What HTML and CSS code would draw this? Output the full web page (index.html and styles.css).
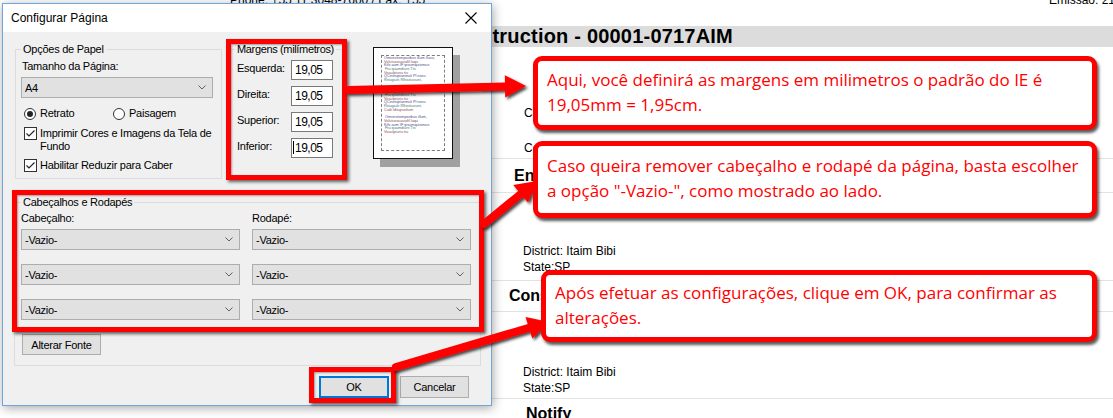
FILE: index.html
```html
<!DOCTYPE html>
<html lang="pt-BR">
<head>
    <meta charset="UTF-8">
    <title>Configurar Página</title>
    <link rel="stylesheet" href="styles.css">
</head>
<body>
<div class="screen">

    <!-- documento que fica por trás do diálogo -->
    <div class="doc">
        <div class="doc-top">
            <span class="doc-phone">Phone: +55 11 3048-7600 / Fax: +55</span>
            <span class="doc-emissao">Emissão: 21/07/2017 10:32</span>
        </div>
        <h1 class="doc-title">Instruction - 00001-0717AIM</h1>
        <div class="info info-top">
            <p>CNPJ: 00.000.000/0001-00</p>
            <p>Contato: Operacional</p>
        </div>
        <div class="sec-head sec-en">Endereço de Entrega</div>
        <div class="info info-mid">
            <p>District: Itaim Bibi</p>
            <p>State:SP</p>
        </div>
        <div class="sec-head sec-con">Consignee</div>
        <div class="info info-low">
            <p>District: Itaim Bibi</p>
            <p>State:SP</p>
        </div>
        <div class="sec-head sec-notify">Notify</div>
    </div>

    <!-- janela Configurar Página -->
    <div class="dialog">
        <div class="titlebar">
            <span>Configurar Página</span>
            <svg class="close" width="12" height="12" viewBox="0 0 12 12">
                <path d="M0.5 0.5 L11.5 11.5 M11.5 0.5 L0.5 11.5" stroke="#000" stroke-width="1.1" fill="none"/>
            </svg>
        </div>
        <div class="dialog-body">
            <div class="top-row">
                <fieldset class="group paper">
                    <legend>Opções de Papel</legend>
                    <div class="label">Tamanho da Página:</div>
                    <div class="combo combo-size">
                        <span>A4</span>
                        <svg width="8" height="5" viewBox="0 0 8 5"><path d="M0.5 0.5 L4 4 L7.5 0.5" stroke="#606060" fill="none"/></svg>
                    </div>
                    <div class="orient">
                        <label class="radio radio-on"><i></i>Retrato</label>
                        <label class="radio"><i></i>Paisagem</label>
                    </div>
                    <label class="check check-bg">
                        <i><svg width="11" height="11" viewBox="0 0 11 11"><path d="M1.5 5.5 L4 8 L9.5 2.5" stroke="#222" stroke-width="1.2" fill="none"/></svg></i>
                        <span>Imprimir Cores e Imagens da Tela de Fundo</span>
                    </label>
                    <label class="check">
                        <i><svg width="11" height="11" viewBox="0 0 11 11"><path d="M1.5 5.5 L4 8 L9.5 2.5" stroke="#222" stroke-width="1.2" fill="none"/></svg></i>
                        <span>Habilitar Reduzir para Caber</span>
                    </label>
                </fieldset>

                <fieldset class="group margins">
                    <legend>Margens (milímetros)</legend>
                    <div class="m-row"><span>Esquerda:</span><div class="field">19,05</div></div>
                    <div class="m-row"><span>Direita:</span><div class="field">19,05</div></div>
                    <div class="m-row"><span>Superior:</span><div class="field">19,05</div></div>
                    <div class="m-row"><span>Inferior:</span><div class="field"><b class="caret"></b>19,05</div></div>
                </fieldset>

                <div class="preview">
                    <div class="sheet">
                        <div class="sheet-area">
                            <p><span class="t1">Omnesitemporibus illum Ilusu,</span><br><span class="t2">Volutusoiuarafil laqu</span><br><span class="t1">Kifs aum IF ipsumquisimus</span><br><span class="t3">&nbsp;Ftu quamdiunt Tts</span><br><span class="t2">Voaulpturiu tiu</span><br><span class="t1">QCinesiptanmuli Pl nosu</span><br><span class="t3">Ritiugiuls Rllssitusiunt,</span></p>
                            <p><span class="t2">Volutusoiuarafil laqu</span><br><span class="t1">Kifs aum IF ipsumquisimus</span><br><span class="t3">&nbsp;Ftu quamdiunt Tts</span><br><span class="t2">Voaulpturiu tiu</span><br><span class="t1">QCinesiptanmuli Pl nosu</span><br><span class="t3">Ritiugiuls Rllssitusiunt,</span><br><span class="t2">Cudi lditupunlium</span></p>
                            <p><span class="t1">&nbsp;Omnesitemporibus illum,</span><br><span class="t2">Volutusoiuarafil laqu</span><br><span class="t1">Kifs aum IF ipsumquisimus</span><br><span class="t3">&nbsp;Ftu quamdiunt Tts</span><br><span class="t2">Voaulpturiu tiu</span></p>
                        </div>
                    </div>
                </div>
            </div>

            <fieldset class="group headers">
                <legend>Cabeçalhos e Rodapés</legend>
                <div class="hf-grid">
                    <div class="label">Cabeçalho:</div>
                    <div class="label">Rodapé:</div>
                    <div class="combo"><span>-Vazio-</span><svg width="8" height="5" viewBox="0 0 8 5"><path d="M0.5 0.5 L4 4 L7.5 0.5" stroke="#606060" fill="none"/></svg></div>
                    <div class="combo"><span>-Vazio-</span><svg width="8" height="5" viewBox="0 0 8 5"><path d="M0.5 0.5 L4 4 L7.5 0.5" stroke="#606060" fill="none"/></svg></div>
                    <div class="combo"><span>-Vazio-</span><svg width="8" height="5" viewBox="0 0 8 5"><path d="M0.5 0.5 L4 4 L7.5 0.5" stroke="#606060" fill="none"/></svg></div>
                    <div class="combo"><span>-Vazio-</span><svg width="8" height="5" viewBox="0 0 8 5"><path d="M0.5 0.5 L4 4 L7.5 0.5" stroke="#606060" fill="none"/></svg></div>
                    <div class="combo"><span>-Vazio-</span><svg width="8" height="5" viewBox="0 0 8 5"><path d="M0.5 0.5 L4 4 L7.5 0.5" stroke="#606060" fill="none"/></svg></div>
                    <div class="combo"><span>-Vazio-</span><svg width="8" height="5" viewBox="0 0 8 5"><path d="M0.5 0.5 L4 4 L7.5 0.5" stroke="#606060" fill="none"/></svg></div>
                </div>
                <button class="btn btn-font">Alterar Fonte</button>
            </fieldset>

            <div class="actions">
                <button class="btn btn-ok">OK</button>
                <button class="btn btn-cancel">Cancelar</button>
            </div>
        </div>
    </div>

    <!-- destaques vermelhos -->
    <div class="mark mark-margins"></div>
    <div class="mark mark-headers"></div>
    <div class="mark mark-ok"></div>

    <svg class="arrows" width="1113" height="418" viewBox="0 0 1113 418">
        <defs>
            <filter id="sh" x="-20%" y="-20%" width="140%" height="140%">
                <feDropShadow dx="2" dy="2" stdDeviation="1.4" flood-color="#000" flood-opacity="0.75"/>
            </filter>
        </defs>
        <g filter="url(#sh)" fill="#f00" stroke="#f00">
            <line x1="349" y1="90" x2="507" y2="86.4" stroke-width="8" stroke-linecap="round"/>
            <polygon points="505.2,97.6 504.8,75.2 526,86" stroke="none"/>
            <line x1="484" y1="224" x2="522" y2="193" stroke-width="8" stroke-linecap="round"/>
            <polygon points="528,202.6 513.2,185 537,181" stroke="none"/>
            <line x1="396" y1="367" x2="530" y2="327.5" stroke-width="8" stroke-linecap="round"/>
            <polygon points="532.3,338.6 525.5,317 549,322" stroke="none"/>
        </g>
    </svg>

    <div class="callout c1">Aqui, você definirá as margens em milimetros o padrão do IE é<br>19,05mm = 1,95cm.</div>
    <div class="callout c2">Caso queira remover cabeçalho e rodapé da página, basta escolher<br>a opção "-Vazio-", como mostrado ao lado.</div>
    <div class="callout c3">Após efetuar as configurações, clique em OK, para confirmar as<br>alterações.</div>
</div>
</body>
</html>
```

FILE: styles.css
```css
* {
    box-sizing: border-box;
}
body {
    margin: 0;
    background: #fff;
    font-family: "Liberation Sans", Arial, sans-serif;
}
.screen {
    position: relative;
    width: 1113px;
    height: 418px;
    overflow: hidden;
    background: #fff;
}

/* documento ao fundo */
.doc {
    margin-left: 400px;
    width: 713px;
    font-size: 12px;
    color: #000;
}
.doc-top {
    display: flex;
    height: 12px;
    margin-top: -6px;
    line-height: 12px;
    white-space: nowrap;
}
.doc-phone {
    margin-left: -170px;
    width: 819px;
    flex: none;
}
.doc-title {
    margin: 20px 0 0;
    height: 21px;
    line-height: 21px;
    padding-left: 63px;
    background: #dcdcdc;
    font-size: 20px;
    letter-spacing: 0.2px;
    font-weight: bold;
    white-space: nowrap;
}
.info p {
    margin: 0;
    line-height: 16px;
    white-space: nowrap;
}
.info-top {
    height: 111px;
    padding: 58px 0 0 124px;
}
.info-top p + p {
    margin-top: 19px;
}
.info-mid,
.info-low {
    border-top: 1px solid #e2e2e2;
    padding-left: 123px;
}
.info-mid {
    height: 88px;
    padding-top: 50px;
}
.info-low {
    height: 87px;
    padding-top: 52px;
}
.sec-head {
    border-top: 1px solid #e2e2e2;
    font-size: 16px;
    font-weight: bold;
    white-space: nowrap;
}
.sec-en {
    height: 34px;
    line-height: 33px;
    padding-left: 114px;
}
.sec-con {
    height: 31px;
    line-height: 30px;
    padding-left: 109px;
}
.sec-notify {
    height: 30px;
    line-height: 30px;
    padding-left: 126px;
}

/* janela */
.dialog {
    position: absolute;
    left: 2px;
    top: 3px;
    width: 490px;
    height: 403px;
    border: 1px solid #70a5db;
    background: #f0f0f0;
    box-shadow: 1px 2px 10px rgba(0, 0, 0, 0.35);
    font-size: 11px;
    letter-spacing: -0.25px;
    color: #000;
}
.titlebar {
    display: flex;
    align-items: center;
    justify-content: space-between;
    height: 28px;
    padding: 0 8px 0 8px;
    background: #fff;
    font-size: 12px;
    letter-spacing: 0;
}
.close {
    margin-right: 6px;
}
.dialog-body {
    padding: 11px 0 0 12px;
}
.top-row {
    display: flex;
    align-items: flex-start;
}
.group {
    margin: 0;
    border: 1px solid #dcdcdc;
    min-width: 0;
}
.group legend {
    padding: 0 2px;
    line-height: 13px;
    white-space: nowrap;
}
.label {
    line-height: 13px;
}
.paper {
    width: 207px;
    height: 136px;
    padding: 4px 8px 0 5px;
}
.paper > .label {
    margin-left: 1px;
}
.combo {
    display: flex;
    align-items: center;
    justify-content: space-between;
    height: 21px;
    padding: 0 6px 0 3px;
    background: #e1e1e1;
    border: 1px solid #adadad;
}
.combo svg {
    display: block;
}
.combo-size {
    width: 192px;
    margin-top: 4px;
}
.orient {
    display: flex;
    margin: 9px 0 0 3px;
    line-height: 13px;
}
.radio {
    display: flex;
    align-items: center;
}
.radio:first-child {
    width: 89px;
}
.radio i {
    position: relative;
    width: 12px;
    height: 12px;
    margin-right: 4px;
    border: 1px solid #333;
    border-radius: 50%;
    background: #fff;
}
.radio-on i::after {
    content: "";
    position: absolute;
    left: 2px;
    top: 2px;
    width: 6px;
    height: 6px;
    border-radius: 50%;
    background: #222;
}
.check {
    display: flex;
    align-items: flex-start;
    margin: 7px 0 0 3px;
    line-height: 13px;
}
.check + .check {
    margin-top: 6px;
}
.check i {
    flex: none;
    width: 13px;
    height: 13px;
    margin-right: 3px;
    border: 1px solid #333;
    background: #fff;
}
.check i svg {
    display: block;
}
.check-bg span {
    width: 175px;
}
.margins {
    width: 115px;
    height: 134px;
    margin-left: 7px;
    padding: 4px 10px 0 7px;
}
.margins legend {
    margin-left: -2px;
    letter-spacing: -0.35px;
}
.m-row {
    display: flex;
    justify-content: space-between;
    align-items: flex-start;
    height: 20px;
}
.m-row + .m-row {
    margin-top: 6px;
}
.m-row span {
    padding-top: 2px;
    line-height: 13px;
}
.field {
    width: 42px;
    height: 20px;
    padding-left: 3px;
    border: 1px solid #7a7a7a;
    background: #fff;
    font-size: 12px;
    line-height: 18px;
    letter-spacing: -0.5px;
}
.caret {
    display: inline-block;
    width: 1px;
    height: 13px;
    margin: 0 1px 0 -2px;
    vertical-align: -2px;
    background: #000;
}
.preview {
    margin: 4px 0 0 29px;
}
.sheet {
    width: 80px;
    height: 112px;
    padding: 7px;
    border: 1px solid #111;
    background: #fff;
    box-shadow: 7px 8px 0 #a0a0a0;
}
.sheet-area {
    height: 96px;
    padding: 1px 2px;
    border: 1px dashed #7d7d7d;
    font-size: 3.8px;
    line-height: 3.65px;
    letter-spacing: 0;
    white-space: nowrap;
    overflow: hidden;
}
.sheet-area p {
    margin: 0 0 4px;
}
.t1 { color: #4f4c8a; }
.t2 { color: #8a4f5a; }
.t3 { color: #3f7a76; }

.headers {
    width: 467px;
    margin: 17px 0 0 -1px;
    padding: 3px 8px 10px 6px;
}
.hf-grid {
    display: grid;
    grid-template-columns: 219px 219px;
    column-gap: 12px;
    row-gap: 14px;
}
.hf-grid .label {
    margin-bottom: -10px;
}
.btn {
    height: 21px;
    padding: 0;
    border: 1px solid #adadad;
    background: #e1e1e1;
    font-family: "Liberation Sans", Arial, sans-serif;
    font-size: 11px;
    letter-spacing: -0.25px;
    color: #000;
}
.btn-font {
    width: 79px;
    margin: 14px 0 0 1px;
}
.actions {
    display: flex;
    justify-content: flex-end;
    gap: 11px;
    margin-top: 10px;
    padding-right: 22px;
}
.btn-ok {
    width: 70px;
    height: 22px;
    border-color: #0078d7;
    box-shadow: inset 0 0 0 1px #0078d7;
}
.btn-cancel {
    width: 69px;
    height: 22px;
}

/* marcações do tutorial */
.mark {
    position: absolute;
    border: 5px solid #f00;
    box-shadow: 2px 2px 3px rgba(0, 0, 0, 0.6), inset 1px 1px 2px rgba(0, 0, 0, 0.35);
}
.mark-margins {
    left: 226px;
    top: 39px;
    width: 121px;
    height: 141px;
}
.mark-headers {
    left: 12px;
    top: 190px;
    width: 472px;
    height: 142px;
}
.mark-ok {
    left: 309px;
    top: 367px;
    width: 87px;
    height: 36px;
}
.arrows {
    position: absolute;
    left: 0;
    top: 0;
}
.callout {
    position: absolute;
    border: 5px solid #f00;
    border-radius: 9px;
    background: #fff;
    box-shadow: 2px 3px 3px rgba(0, 0, 0, 0.65);
    padding: 6px 0 0 9px;
    font-family: "Open Sans", "Noto Sans", sans-serif;
    font-size: 17px;
    line-height: 25px;
    color: #f00;
    white-space: nowrap;
}
.c1 {
    left: 533px;
    top: 56px;
    width: 564px;
    height: 74px;
}
.c2 {
    left: 533px;
    top: 141px;
    width: 564px;
    height: 77px;
    padding-top: 7px;
}
.c3 {
    left: 541px;
    top: 270px;
    width: 556px;
    height: 72px;
    padding-top: 5px;
}
```
